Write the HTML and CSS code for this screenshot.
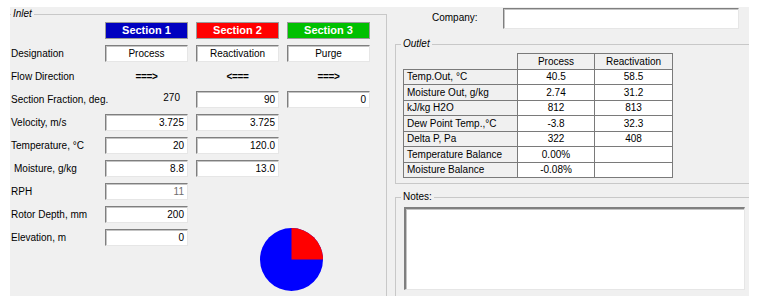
FILE: index.html
```html
<!DOCTYPE html>
<html>
<head>
<meta charset="utf-8">
<link rel="stylesheet" href="styles.css">
</head>
<body>
<div class="window">
  <fieldset class="group inlet">
    <legend class="italic">Inlet</legend>
    <div class="grid">
      <div></div>
      <div class="sec sec1">Section 1</div>
      <div class="sec sec2">Section 2</div>
      <div class="sec sec3">Section 3</div>

      <div class="lbl">Designation</div>
      <div class="field center">Process</div>
      <div class="field center">Reactivation</div>
      <div class="field center">Purge</div>

      <div class="lbl">Flow Direction</div>
      <div class="flow">===&gt;</div>
      <div class="flow">&lt;===</div>
      <div class="flow">===&gt;</div>

      <div class="lbl">Section Fraction, deg.</div>
      <div class="plain">270</div>
      <div class="field">90</div>
      <div class="field">0</div>

      <div class="lbl">Velocity, m/s</div>
      <div class="field">3.725</div>
      <div class="field">3.725</div>
      <div></div>

      <div class="lbl">Temperature, °C</div>
      <div class="field">20</div>
      <div class="field">120.0</div>
      <div></div>

      <div class="lbl indent">Moisture, g/kg</div>
      <div class="field">8.8</div>
      <div class="field">13.0</div>
      <div></div>

      <div class="lbl">RPH</div>
      <div class="field disabled">11</div>
      <div></div>
      <div></div>

      <div class="lbl">Rotor Depth, mm</div>
      <div class="field">200</div>
      <div></div>
      <div></div>

      <div class="lbl">Elevation, m</div>
      <div class="field">0</div>
      <div class="pie">
        <svg width="63" height="63" viewBox="0 0 63 63">
          <circle cx="31.5" cy="31.5" r="31.5" fill="#0000ff"/>
          <path d="M31.5 31.5 L31.5 0 A31.5 31.5 0 0 1 63 31.5 Z" fill="#ff0000"/>
        </svg>
      </div>
    </div>
  </fieldset>

  <div class="right">
    <div class="company">
      <span class="company-label">Company:</span>
      <div class="field company-field"></div>
    </div>

    <fieldset class="group outlet">
      <legend class="italic">Outlet</legend>
      <table class="results">
        <colgroup><col class="c1"><col class="c2"><col class="c3"></colgroup>
        <tr><th class="blank"></th><th>Process</th><th>Reactivation</th></tr>
        <tr><td class="name">Temp.Out, °C</td><td>40.5</td><td>58.5</td></tr>
        <tr><td class="name">Moisture Out, g/kg</td><td>2.74</td><td>31.2</td></tr>
        <tr><td class="name">kJ/kg H2O</td><td>812</td><td>813</td></tr>
        <tr><td class="name">Dew Point Temp.,°C</td><td>-3.8</td><td>32.3</td></tr>
        <tr><td class="name">Delta P, Pa</td><td>322</td><td>408</td></tr>
        <tr><td class="name">Temperature Balance</td><td>0.00%</td><td></td></tr>
        <tr><td class="name">Moisture Balance</td><td>-0.08%</td><td></td></tr>
      </table>
    </fieldset>

    <fieldset class="group notes">
      <legend>Notes:</legend>
      <div class="field notes-area"></div>
    </fieldset>
  </div>
</div>
</body>
</html>
```

FILE: styles.css
```css
* { box-sizing: border-box; }

html, body {
  margin: 0;
  padding: 0;
  background: #ffffff;
}

body {
  font-family: "Liberation Sans", Arial, sans-serif;
  font-size: 10px;
  color: #000;
}

.window {
  margin: 7px 0 0 10px;
  width: 739px;
  height: 289px;
  background: #f0f0f0;
  display: flex;
  overflow: hidden;
}

.group {
  margin: 0;
  min-width: 0;
  border: none;
  border-color: #c8c8c8;
}

.group legend {
  padding: 0 2px;
  font-size: 10px;
  line-height: 12px;
}

.italic { font-style: italic; }

/* Inlet */
.inlet {
  width: 377px;
  margin-top: 1px;
  padding: 0 0 0 1px;
  border-top: 1px solid #c8c8c8;
  border-right: 1px solid #c8c8c8;
}

.grid {
  margin-top: 2px;
  display: grid;
  grid-template-columns: 86px 83px 83px 83px;
  grid-auto-rows: 17px;
  column-gap: 8px;
  row-gap: 6px;
}

.lbl {
  white-space: nowrap;
  line-height: 17px;
}
.indent { padding-left: 3px; }

.sec {
  color: #fff;
  font-weight: bold;
  font-size: 11px;
  text-align: center;
  line-height: 15px;
  border: 1px solid #9a9a9a;
}
.sec1 { background: #0000c0; }
.sec2 { background: #ff0000; }
.sec3 { background: #00c000; }

.field {
  background: #fff;
  border: 1px solid;
  border-color: #7f7f7f #e6e6e6 #e6e6e6 #7f7f7f;
  box-shadow: inset 1px 1px 0 #c4c4c4;
  text-align: right;
  padding: 0 3px;
  line-height: 15px;
  white-space: nowrap;
}
.field.center { text-align: center; }
.field.disabled { color: #6d6d6d; }

.flow {
  text-align: center;
  font-weight: bold;
  line-height: 17px;
  letter-spacing: -0.3px;
}

.plain {
  text-align: right;
  padding-right: 8px;
  line-height: 14px;
}

.pie {
  grid-column: 3 / span 2;
  grid-row: 10 / span 3;
  margin-left: 64px;
  margin-top: -1px;
  width: 63px;
  height: 63px;
}
.pie svg { display: block; }

/* Right side */
.right {
  flex: 1;
  margin-left: 8px;
  display: flex;
  flex-direction: column;
  min-width: 0;
}

.company {
  height: 31px;
  display: flex;
  align-items: flex-start;
  padding-left: 37px;
}
.company-label {
  margin-top: 5px;
  width: 71px;
}
.company-field {
  margin-top: 1px;
  width: 236px;
  height: 21px;
}

.outlet {
  padding: 0 0 5px 5px;
  border-top: 1px solid #c8c8c8;
  border-left: 1px solid #c8c8c8;
  border-bottom: 1px solid #c8c8c8;
}

.results {
  margin: 3px 0 0 2px;
  border-collapse: collapse;
  table-layout: fixed;
  width: 269px;
}
.results .c1 { width: 114px; }
.results .c2 { width: 77px; }
.results .c3 { width: 78px; }

.results th,
.results td {
  border: 1px solid #7a7a7a;
  height: 15.5px;
  padding: 0 3px;
  font-weight: normal;
  text-align: center;
  line-height: 13px;
  white-space: nowrap;
  background: #fff;
}
.results th { background: #f0f0f0; }
.results th.blank {
  border-top-color: transparent;
  border-left-color: transparent;
  background: transparent;
}
.results td.name {
  text-align: left;
  background: #f0f0f0;
}

.notes {
  flex: 1;
  margin-top: 7px;
  padding: 0 0 0 5px;
  border-top: 1px solid #c8c8c8;
  border-left: 1px solid #c8c8c8;
}
.notes-area {
  margin: 4px 0 0 3px;
  width: 341px;
  height: 83px;
  border-top-width: 2px;
  border-left-width: 2px;
}
```
